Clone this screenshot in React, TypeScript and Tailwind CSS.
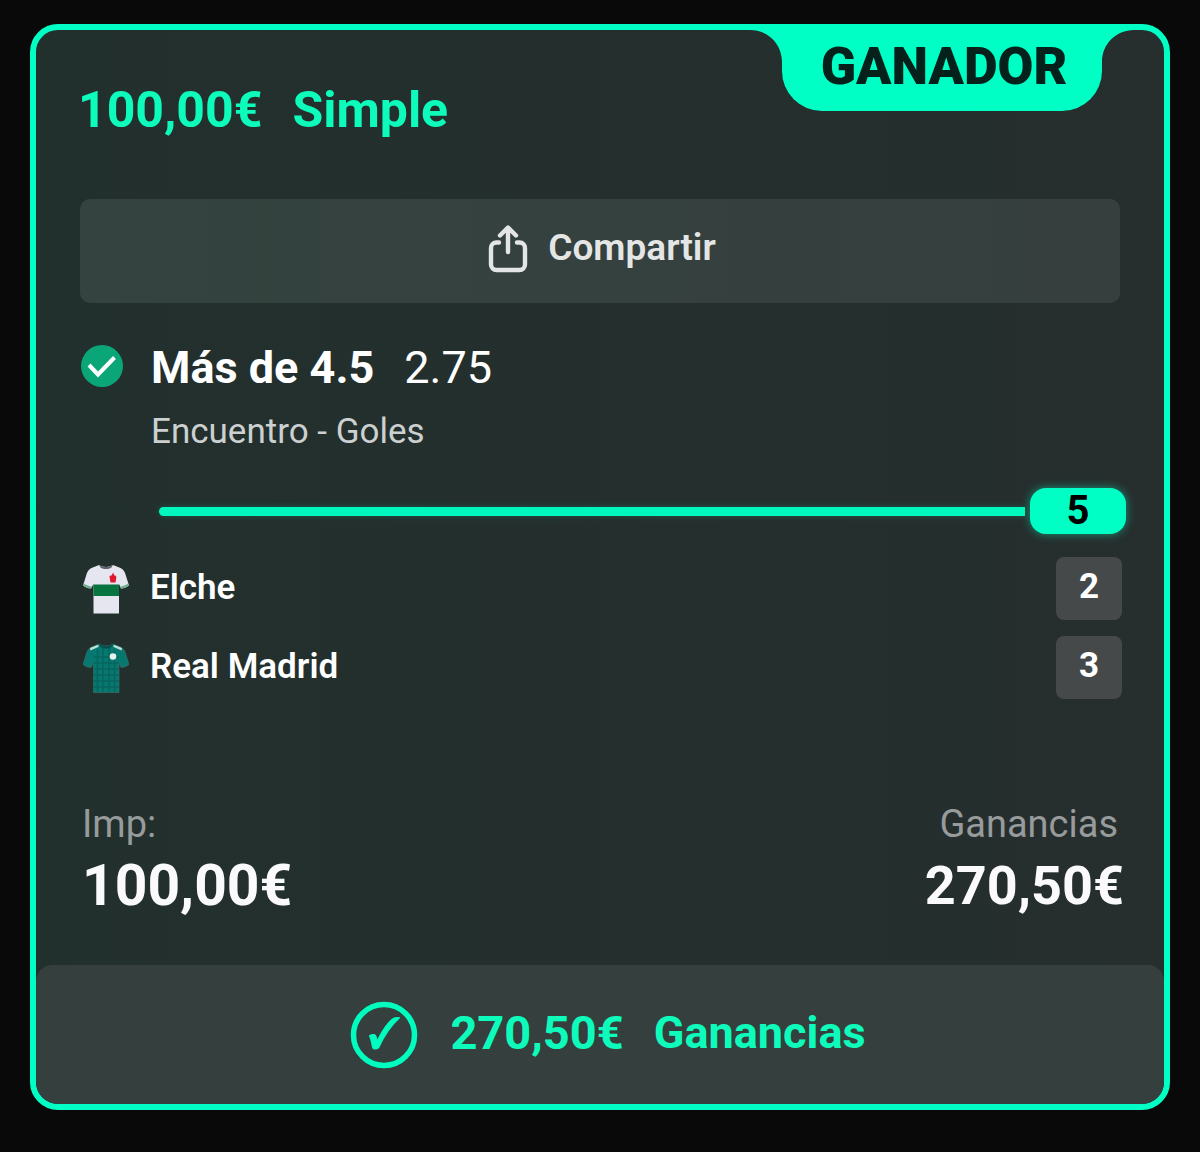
import React from 'react';

interface Team {
  name: string;
  score: number;
  shirt: React.ReactNode;
}

const ShareIcon: React.FC = () => (
  <svg
    className="w-10 h-12 shrink-0"
    viewBox="0 0 40 48"
    fill="none"
    stroke="currentColor"
    strokeWidth="4.4"
    strokeLinecap="round"
    strokeLinejoin="round"
    aria-hidden="true"
  >
    <path d="M11 17.5H8.5a5.500 5.500 0 0 0-5.500 5.500v16.500a5.500 5.500 0 0 0 5.500 5.500h23a5.500 5.500 0 0 0 5.500-5.500V23a5.500 5.500 0 0 0-5.500-5.500H29" />
    <path d="M20 27V3M12 10.500l8-8 8 8" />
  </svg>
);

const CheckBadgeIcon: React.FC = () => (
  <svg className="w-[42px] h-[42px] shrink-0" viewBox="0 0 42 42" aria-hidden="true">
    <circle cx="21" cy="21" r="21" fill="#0ba678" />
    <path d="M8 20l9 9.500L33.500 12.500" fill="none" stroke="#fff" strokeWidth="4" />
  </svg>
);

const CheckCircleIcon: React.FC = () => (
  <svg className="w-[68px] h-[68px] shrink-0" viewBox="0 0 68 68" aria-hidden="true">
    <circle cx="34" cy="34" r="30.500" fill="none" stroke="#00fcbe" strokeWidth="5.500" />
    <path
      d="M19.500 35c1.500-1.500 4.500-2 6-.5.8 1 1.300 3 1.700 5.500C31.500 31 37 22.500 42.500 18c2-1.200 4.500-1.500 7-1.200C41 24.500 34.500 34 29 46c-.8 1.700-1.500 2-3.500 2-1.800 0-2.600-.4-3-2.200C21.800 42 21 38 19.500 35z"
      fill="#00fcbe"
      stroke="#00fcbe"
      strokeWidth="1.200"
      strokeLinejoin="round"
    />
  </svg>
);

const SHIRT_OUTLINE =
  'M16 1c4 2.500 10 2.500 14 0l7.500 3c3 1.300 4.500 4 5.500 8l3 9.500c-2.500 2-5.500 3-8 3L36 20v29.500H10.500V20L8 24.500c-3 0-5.500-1-8-3l3-9.500c1-4 2.500-6.700 5.500-8z';

const ElcheShirt: React.FC = () => (
  <svg className="w-[46px] h-[50px] shrink-0" viewBox="0 0 46 50" aria-hidden="true">
    <path d={SHIRT_OUTLINE} fill="#e6e6f0" />
    <path d="M10.500 20.500H36v11.500H10.500z" fill="#08743f" />
    <path d="M0 21.500c2.500 2 5 3 8 3l1-2c-3-.3-5.500-1.200-8-3zM46 21.500c-2.500 2-5 3-8 3l-1-2c3-.3 5.500-1.200 8-3z" fill="#6fae90" />
    <path d="M16 1c4 2.500 10 2.500 14 0l-1.500 2.500c-3 2-8 2-11 0z" fill="#59636e" />
    <path d="M26.500 12l2.300-.8L30 8.500l1.200 2.700 2 .8v2.500l-.7 4h-5l-.7-4z" fill="#e0182d" />
  </svg>
);

const MadridShirt: React.FC = () => (
  <svg className="w-[46px] h-[50px] shrink-0" viewBox="0 0 46 50" aria-hidden="true">
    <path d={SHIRT_OUTLINE} fill="#07786f" stroke="#3f706b" strokeWidth=".6" />
    <path
      d="M14.500 7v42M20 5v44M26 5v44M31.500 7v42M10.500 14H36M10.500 20H36M10.500 26H36M10.500 32H36M10.500 38H36M10.500 44H36"
      stroke="#07655f"
      strokeWidth="1.500"
    />
    <path d="M16 1c4 2.500 10 2.500 14 0l-1.500 3c-3 2-8 2-11 0z" fill="#06504e" />
    <path d="M7 5l8-3.300.8 2-8.300 3.800zM39 5l-8-3.300-.8 2 8.300 3.800z" fill="#bfe0da" />
    <circle cx="30" cy="13.500" r="3.300" fill="#e4f3f0" />
  </svg>
);

const teams: Team[] = [
  { name: 'Elche', score: 2, shirt: <ElcheShirt /> },
  { name: 'Real Madrid', score: 3, shirt: <MadridShirt /> },
];

// Tab hanging from the top border, with concave corners on both sides
const WinnerTab: React.FC = () => (
  <div className="absolute top-0 right-[30px] flex items-start text-[#00ffc4]">
    <svg className="w-8 h-8" viewBox="0 0 32 32" fill="currentColor" aria-hidden="true">
      <path d="M0 0h32v32C32 14 18 0 0 0z" />
    </svg>
    <div className="h-[81px] w-[320px] rounded-b-[40px] bg-[#00ffc4] text-center">
      <span className="block pl-1 text-[52px] leading-[74px] font-black text-[#04211c]">GANADOR</span>
    </div>
    <svg className="w-8 h-8" viewBox="0 0 32 32" fill="currentColor" aria-hidden="true">
      <path d="M32 0H0v32C0 14 14 0 32 0z" />
    </svg>
  </div>
);

const App: React.FC = () => {
  return (
    <main className="min-h-screen bg-[#090909] px-[30px] pt-6 pb-[42px] font-['Roboto',sans-serif]">
      <article className="relative overflow-hidden rounded-[28px] border-[6px] border-[#00ffc4] bg-linear-to-r from-[#22302d] to-[#262e2e]">
        <WinnerTab />

        <header className="flex gap-[30px] px-[42px] pt-[50px] text-[50px] leading-[60px] font-bold text-[#0dfbbb]">
          <span>100,00€</span>
          <h1>Simple</h1>
        </header>

        <div className="px-[44px] pt-[59px]">
          <button
            type="button"
            className="flex w-full h-[104px] items-center justify-center gap-5 rounded-[10px] bg-linear-to-r from-[#34433f] to-[#363f3e] pb-1 pl-1 text-[37px] leading-[48px] font-semibold text-[#e4e6e6]"
          >
            <ShareIcon />
            <span className="pb-0.5">Compartir</span>
          </button>
        </div>

        <section className="flex items-start gap-[28px] px-[45px] pt-[37px]">
          <div className="flex h-[52px] items-center">
            <CheckBadgeIcon />
          </div>
          <div>
            <h2 className="flex gap-[30px] text-[45px] leading-[56px] text-white">
              <span className="font-bold">Más de 4.5</span>
              <span>2.75</span>
            </h2>
            <p className="pt-4 text-[35px] leading-[40px] text-[#cdd0d0]">Encuentro - Goles</p>
          </div>
        </section>

        <div className="flex items-center gap-[5px] pt-9 pl-[123px] pr-[38px]">
          <div className="h-[9px] flex-1 rounded-l-full bg-[#00f8be] shadow-[0_0_6px_#00ffc433]" />
          <div className="flex h-[46px] w-24 items-center justify-center rounded-[16px] bg-[#00ffc4] text-[40px] leading-[46px] font-bold text-black shadow-[0_0_10px_#00ffc480]">
            5
          </div>
        </div>

        <ul className="flex flex-col gap-4 pt-[23px] pl-[47px] pr-[42px]">
          {teams.map((team) => (
            <li key={team.name} className="flex items-center text-[35px] leading-[40px] text-white">
              {team.shirt}
              <span className="flex-1 pb-0.5 pl-[21px] font-semibold">{team.name}</span>
              <span className="flex h-[63px] w-[66px] items-center justify-center rounded-lg bg-[#464949] pb-1 font-bold">
                {team.score}
              </span>
            </li>
          ))}
        </ul>

        <dl className="flex justify-between pt-[101px] pb-[49px] pl-[46px] pr-[40px]">
          <div>
            <dt className="text-[38px] leading-[48px] text-[#979b9b]">Imp:</dt>
            <dd className="pt-2 text-[57px] leading-[60px] font-bold text-[#fafafc]">100,00€</dd>
          </div>
          <div className="text-right">
            <dt className="pr-[6px] text-[38px] leading-[48px] text-[#979b9b]">Ganancias</dt>
            <dd className="pt-2 text-[54px] leading-[60px] font-bold text-[#fafafc]">270,50€</dd>
          </div>
        </dl>

        <footer className="flex h-[139px] items-center justify-center rounded-t-[16px] bg-[#353f3d] pl-4 text-[47px] leading-[56px] font-bold text-[#0dfbbb]">
          <CheckCircleIcon />
          <span className="pb-1 pl-8">270,50€</span>
          <span className="pb-1 pl-[30px] text-[45px]">Ganancias</span>
        </footer>
      </article>
    </main>
  );
};

export default App;
